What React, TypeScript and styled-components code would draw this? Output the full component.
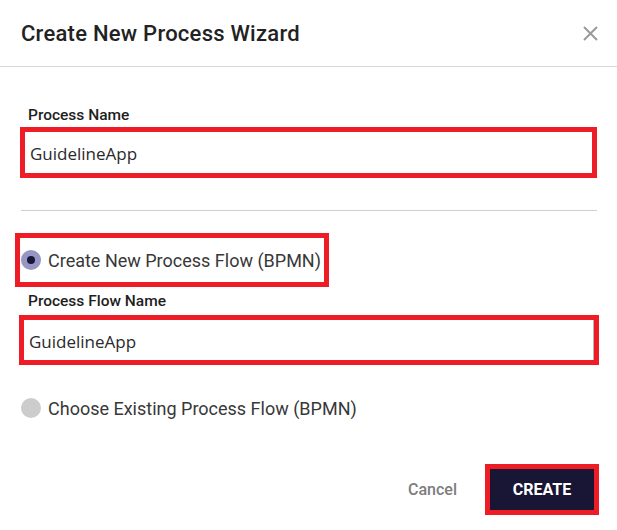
import React from "react";
import styled, { createGlobalStyle } from "styled-components";

const Global = createGlobalStyle`
  html, body { margin: 0; padding: 0; background: #ffffff; }
  body { font-family: Roboto, "Liberation Sans", sans-serif; }
  * { box-sizing: border-box; }
`;

const Dialog = styled.div`
  width: 617px;
  height: 530px;
  background: #fff;
  display: flex;
  flex-direction: column;
`;

const Header = styled.div`
  height: 67px;
  padding: 0 19px 0 21px;
  border-bottom: 1px solid #d9d9d9;
  display: flex;
  align-items: center;
  justify-content: space-between;
`;

const Title = styled.h1`
  margin: 0;
  font-family: Roboto, sans-serif;
  font-weight: 500;
  font-size: 22px;
  letter-spacing: 0.25px;
  color: #222;
  line-height: 24px;
  padding-top: 2px;
`;

const CloseButton = styled.button`
  border: 0;
  background: none;
  padding: 0;
  width: 15px;
  height: 15px;
  display: flex;
  cursor: pointer;
`;

const Body = styled.div`
  padding: 39px 18px 0 20px;
  display: flex;
  flex-direction: column;
`;

const Label = styled.div<{ $top?: number }>`
  font-family: Roboto, sans-serif;
  font-weight: 500;
  font-size: 15.5px;
  line-height: 18px;
  color: #1e1e1e;
  padding-left: 8px;
  margin-top: ${(p) => p.$top ?? 0}px;
`;

const Highlight = styled.div<{ $top?: number; $left?: number; $right?: number; $width?: string }>`
  border: 5px solid #ee1c25;
  margin-top: ${(p) => p.$top ?? 0}px;
  margin-left: ${(p) => p.$left ?? 0}px;
  margin-right: ${(p) => p.$right ?? 0}px;
  width: ${(p) => p.$width ?? "auto"};
`;

const TextInput = styled.input<{ $h: number; $edge?: boolean }>`
  display: block;
  width: 100%;
  height: ${(p) => p.$h}px;
  border: 0;
  border-right: ${(p) => (p.$edge ? "1px solid #b5b5b5" : "0")};
  outline: none;
  padding: 2px 0 0 5px;
  font-family: "Open Sans", "Noto Sans", sans-serif;
  font-size: 17px;
  color: #2a2a2a;
  background: #fff;
`;

const Divider = styled.hr`
  margin: 32px 2px 0 1px;
  border: 0;
  border-top: 1px solid #cfcfcf;
  height: 0;
`;

const RadioRow = styled.label<{ $h?: number }>`
  display: flex;
  align-items: center;
  gap: 7px;
  height: ${(p) => p.$h ?? 20}px;
  font-family: Roboto, sans-serif;
  font-size: 18px;
  color: #383838;
  cursor: pointer;
`;

const RadioDot = styled.span<{ $checked?: boolean }>`
  width: 20px;
  height: 20px;
  border-radius: 50%;
  flex: none;
  background: ${(p) => (p.$checked ? "#9796c2" : "#cccccc")};
  display: flex;
  align-items: center;
  justify-content: center;
  &::after {
    content: "";
    width: 8px;
    height: 8px;
    border-radius: 50%;
    background: #16163a;
    display: ${(p) => (p.$checked ? "block" : "none")};
  }
`;

const RadioInner = styled.div`
  padding: 0 0 0 1px;
  display: flex;
  align-items: center;
  height: 44px;
`;

const SecondRadio = styled.div`
  margin-top: 33px;
  padding-left: 1px;
`;

const Footer = styled.div`
  margin-top: 46px;
  display: flex;
  justify-content: flex-end;
  align-items: center;
  gap: 28px;
`;

const CancelButton = styled.button`
  border: 0;
  background: none;
  padding: 0;
  font-family: Roboto, sans-serif;
  font-weight: 500;
  font-size: 16px;
  color: #7d7d7d;
  cursor: pointer;
`;

const CreateButton = styled.button`
  border: 0;
  width: 104px;
  height: 41px;
  background: #181634;
  color: #fff;
  font-family: Roboto, sans-serif;
  font-weight: 700;
  font-size: 16px;
  cursor: pointer;
  display: block;
`;

const CloseIcon = () => (
  <svg width="15" height="15" viewBox="0 0 15 15">
    <path d="M1 1L14 14M14 1L1 14" stroke="#9a9a9a" strokeWidth="2" />
  </svg>
);

export default function App() {
  return (
    <>
      <Global />
      <Dialog>
        <Header>
          <Title>Create New Process Wizard</Title>
          <CloseButton aria-label="Close">
            <CloseIcon />
          </CloseButton>
        </Header>
        <Body>
          <Label>Process Name</Label>
          <Highlight $top={3} $right={2}>
            <TextInput $h={41} defaultValue="GuidelineApp" />
          </Highlight>
          <Divider />
          <Highlight $top={22} $left={-5} $width="314px">
            <RadioInner>
              <RadioRow $h={44}>
                <RadioDot $checked />
                Create New Process Flow (BPMN)
              </RadioRow>
            </RadioInner>
          </Highlight>
          <Label $top={5}>Process Flow Name</Label>
          <Highlight $top={5} $left={-1}>
            <TextInput $h={40} $edge defaultValue="GuidelineApp" />
          </Highlight>
          <SecondRadio>
            <RadioRow>
              <RadioDot />
              Choose Existing Process Flow (BPMN)
            </RadioRow>
          </SecondRadio>
          <Footer>
            <CancelButton>Cancel</CancelButton>
            <Highlight>
              <CreateButton>CREATE</CreateButton>
            </Highlight>
          </Footer>
        </Body>
      </Dialog>
    </>
  );
}
